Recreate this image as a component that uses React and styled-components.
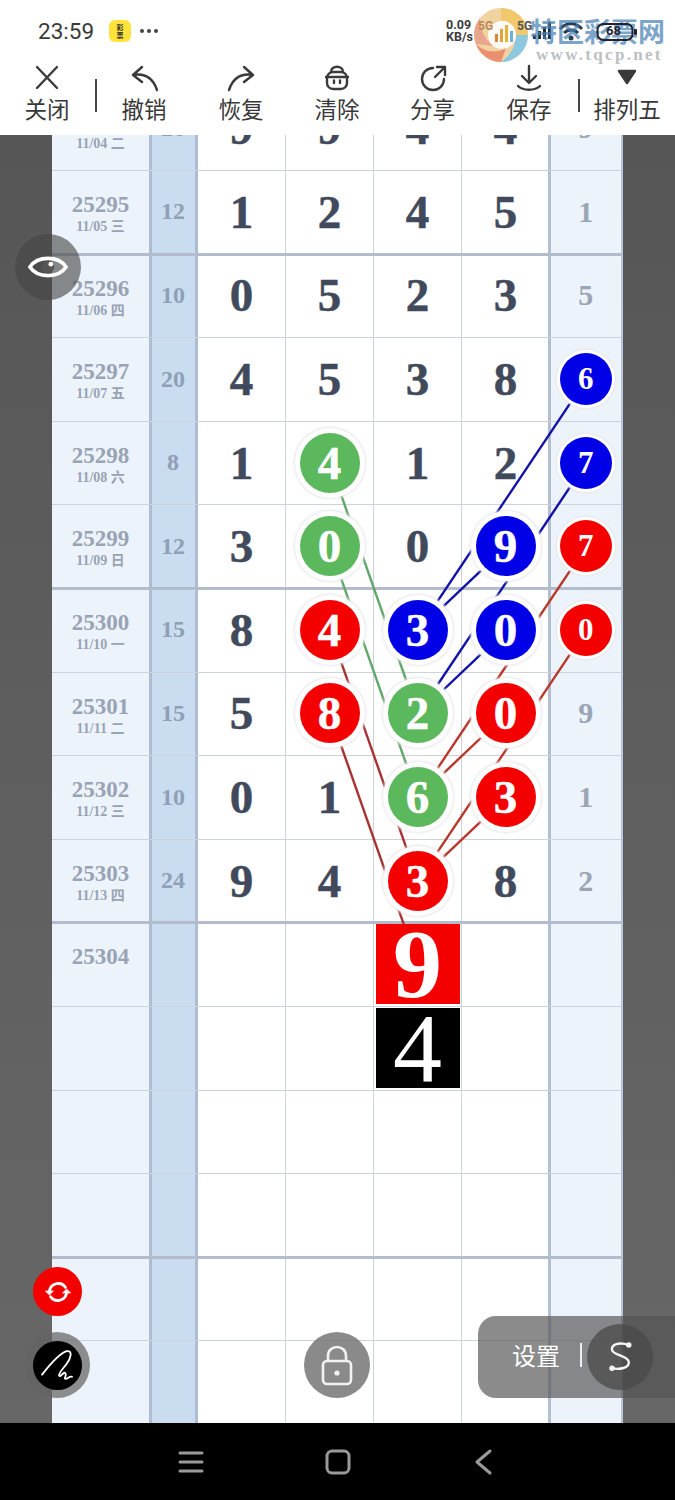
import React from "react";
import styled, { createGlobalStyle } from "styled-components";

const Global = createGlobalStyle`
  html, body { margin: 0; padding: 0; background: #5e5e5e; }
  * { box-sizing: border-box; }
`;

const CJK = `"Noto Sans CJK SC", "Noto Sans", sans-serif`;
const SERIF = `"Liberation Serif", "Noto Sans CJK SC", serif`;

const ROW_H = 83.6;
const COLS = [97, 49, 88, 88, 88, 88, 72];
const centerX = (c) => COLS.slice(0, c).reduce((a, b) => a + b, 0) + COLS[c] / 2;
const centerY = (r) => ROW_H * (r + 0.5);

const RED = "#f50000", BLUE = "#0000e6", GREEN = "#5cb85c";

/* rows: id, date, sum, four digits (value or [value, colour]), side digit */
const ROWS = [
  ["25294", "11/04 二", 26, [9, 9, 4, 4], 9],
  ["25295", "11/05 三", 12, [1, 2, 4, 5], 1, true],
  ["25296", "11/06 四", 10, [0, 5, 2, 3], 5],
  ["25297", "11/07 五", 20, [4, 5, 3, 8], [6, BLUE]],
  ["25298", "11/08 六", 8, [1, [4, GREEN], 1, 2], [7, BLUE]],
  ["25299", "11/09 日", 12, [3, [0, GREEN], 0, [9, BLUE]], [7, RED], true],
  ["25300", "11/10 一", 15, [8, [4, RED], [3, BLUE], [0, BLUE]], [0, RED]],
  ["25301", "11/11 二", 15, [5, [8, RED], [2, GREEN], [0, RED]], 9],
  ["25302", "11/12 三", 10, [0, 1, [6, GREEN], [3, RED]], 1],
  ["25303", "11/13 四", 24, [9, 4, [3, RED], 8], 2, true],
];

const LINES = [
  ["#1212a8", 6, 3, 4, 6],
  ["#1212a8", 6, 4, 4, 7],
  ["#1212a8", 5, 5, 4, 6],
  ["#1212a8", 5, 6, 4, 7],
  ["#b8392c", 6, 5, 4, 8],
  ["#b8392c", 6, 6, 4, 9],
  ["#b8392c", 5, 7, 4, 8],
  ["#b8392c", 5, 8, 4, 9],
  ["#a83232", 3, 6, 4, 9],
  ["#a83232", 3, 7, 4, 10],
  ["#62a76a", 3, 4, 4, 7],
  ["#62a76a", 3, 5, 4, 8],
];

const Page = styled.div`
  width: 675px;
  height: 1500px;
  display: flex;
  flex-direction: column;
  overflow: hidden;
  position: relative;
  font-family: ${CJK};
`;

/* ---------- top area ---------- */
const Top = styled.header`
  height: 135px;
  flex: none;
  background: #fff;
  position: relative;
  z-index: 5;
`;
const StatusBar = styled.div`
  height: 60px;
  display: flex;
  align-items: center;
  padding: 2px 0 0 38px;
`;
const Clock = styled.span`
  font: 400 22.5px Roboto, sans-serif;
  color: #3a3a3a;
  width: 71px;
`;
const AppIcon = styled.div`
  width: 22px;
  height: 22px;
  border-radius: 6px;
  background: #ffe23a;
  display: flex;
  align-items: center;
  justify-content: center;
  font-size: 7px;
  line-height: 8px;
  color: #333;
  text-align: center;
  font-weight: 700;
`;
const Dots = styled.span`
  display: flex;
  gap: 3px;
  margin-left: 9px;
  i {
    width: 4px;
    height: 4px;
    border-radius: 50%;
    background: #444;
  }
`;
const Speed = styled.div`
  position: absolute;
  left: 446px;
  top: 19px;
  font: 700 12.5px/12px Roboto, sans-serif;
  color: #3b3b3b;
`;
const NetTag = styled.span`
  position: absolute;
  left: ${(p) => p.$x}px;
  top: 19px;
  font: 700 12px/14px Roboto, sans-serif;
  color: ${(p) => p.$c};
`;
const WatermarkText = styled.div`
  position: absolute;
  left: 530px;
  top: 13px;
  font: 700 27px/36px ${CJK};
  color: #4a82b4;
  opacity: 0.72;
  white-space: nowrap;
`;
const WatermarkUrl = styled.div`
  position: absolute;
  left: 536px;
  top: 45px;
  font: 700 17px/20px ${SERIF};
  letter-spacing: 2.3px;
  color: #bcc0c4;
  white-space: nowrap;
`;
const Floating = styled.div`
  position: absolute;
  left: ${(p) => p.$x}px;
  top: ${(p) => p.$y}px;
  line-height: 0;
`;
const BatteryLevel = styled.span`
  position: absolute;
  left: 606px;
  top: 24px;
  font: 700 13px/14px Roboto, sans-serif;
  color: #223;
`;
const Toolbar = styled.nav`
  height: 75px;
  display: flex;
  margin-left: -1px;
`;
const ToolItem = styled.div`
  width: ${(p) => p.$w}px;
  flex: none;
  position: relative;
  display: flex;
  flex-direction: column;
  align-items: center;
  padding-top: 4px;
  color: #383838;
  &::before {
    content: "";
    display: ${(p) => (p.$divided ? "block" : "none")};
    position: absolute;
    left: 0;
    top: 19px;
    width: 2px;
    height: 33px;
    background: #444;
  }
`;
const ToolIcon = styled.svg`
  width: 28px;
  height: 28px;
  fill: none;
  stroke: #3a3a3a;
  stroke-width: 2.4;
  stroke-linecap: round;
  stroke-linejoin: round;
`;
const ToolLabel = styled.span`
  font-size: 22.5px;
  line-height: 30px;
  margin-top: 1px;
  white-space: nowrap;
`;

/* ---------- board ---------- */
const Main = styled.main`
  flex: 1;
  min-height: 0;
  overflow: hidden;
  padding-left: 52px;
  background: linear-gradient(#565656, #676767);
`;
const Board = styled.div`
  width: 570.5px;
  margin-top: -48.5px;
  position: relative;
  border-right: 2px solid #b9c5d6;
`;
const Row = styled.div`
  height: ${ROW_H}px;
  display: grid;
  grid-template-columns: 97px 49px 88px 88px 88px 88px 70.5px;
  position: relative;
  &::after {
    content: "";
    position: absolute;
    left: 0;
    right: 0;
    bottom: ${(p) => (p.$heavy ? -2 : -1)}px;
    height: ${(p) => (p.$heavy ? 3 : 1)}px;
    background: ${(p) => (p.$heavy ? "#b3bccc" : "#ccd3dc")};
    z-index: 1;
  }
`;
const IdCell = styled.div`
  background: #edf3fb;
  padding-top: 22px;
  text-align: center;
  color: #98a3b4;
  font-family: ${SERIF};
  font-weight: 700;
`;
const IdText = styled.div`
  font-size: 23px;
  line-height: 26px;
`;
const DateText = styled.div`
  font-size: 14px;
  line-height: 18px;
`;
const SumCell = styled.div`
  background: #c9dcf0;
  border-left: 3px solid #adbcd0;
  border-right: 3px solid #adbcd0;
  display: flex;
  align-items: center;
  justify-content: center;
  color: #8f9fb5;
  font: 700 24px ${SERIF};
  padding-right: 1px;
`;
const DigitCell = styled.div`
  background: #fff;
  border-right: 1px solid #ccd0d8;
  display: flex;
  align-items: center;
  justify-content: center;
  color: #404a5c;
  font: 700 47px ${SERIF};
  -webkit-text-stroke: 0.5px currentColor;
`;
const SideCell = styled.div`
  background: #edf3fb;
  border-left: 3px solid #b3bfd0;
  margin-left: -2px;
  display: flex;
  align-items: center;
  justify-content: center;
  color: #9aa5b6;
  font: 700 30px ${SERIF};
`;
const Ball = styled.div`
  width: ${(p) => (p.$small ? 52 : 60)}px;
  height: ${(p) => (p.$small ? 52 : 60)}px;
  border-radius: 50%;
  background: ${(p) => p.$c};
  color: #fff;
  display: flex;
  align-items: center;
  justify-content: center;
  flex: none;
  font-size: ${(p) => (p.$small ? 31 : 47)}px;
  position: relative;
  z-index: 3;
  box-shadow: ${(p) =>
    p.$small
      ? "0 0 0 3px #fff, 0 0 2px 4px #e8e8e8"
      : "0 0 0 5px #fff, 0 0 3px 6px #e6e6e6"};
`;
const Box = styled.div`
  width: 84px;
  height: 80px;
  background: ${(p) => p.$c};
  color: #fff;
  display: flex;
  align-items: center;
  justify-content: center;
  font: ${(p) => p.$weight} 98px/1 ${SERIF};
  -webkit-text-stroke: 0;
  position: relative;
  z-index: 3;
`;
const LineLayer = styled.svg`
  position: absolute;
  left: 0;
  top: 0;
  z-index: 2;
  pointer-events: none;
`;

/* ---------- floating controls ---------- */
const RoundButton = styled.div`
  position: absolute;
  left: ${(p) => p.$x}px;
  top: ${(p) => p.$y}px;
  width: ${(p) => p.$d}px;
  height: ${(p) => p.$d}px;
  border-radius: 50%;
  background: ${(p) => p.$bg};
  display: flex;
  align-items: center;
  justify-content: center;
  z-index: 6;
`;
const InnerDisc = styled.div`
  width: 49px;
  height: 49px;
  border-radius: 50%;
  background: #000;
  display: flex;
  align-items: center;
  justify-content: center;
`;
const SettingsPill = styled.div`
  position: absolute;
  left: 478px;
  top: 1316px;
  width: 197px;
  height: 82px;
  border-radius: 18px 0 0 18px;
  background: rgba(84, 84, 84, 0.68);
  display: flex;
  align-items: center;
  padding: 0 0 5px 34px;
  color: #fff;
  font-size: 24px;
  z-index: 6;
`;
const PillBar = styled.span`
  width: 2px;
  height: 24px;
  margin-left: 20px;
  background: #eee;
`;
const SDisc = styled.div`
  position: absolute;
  left: 109px;
  top: 8px;
  width: 66px;
  height: 66px;
  border-radius: 50%;
  background: rgba(72, 72, 72, 0.72);
  display: flex;
  align-items: center;
  justify-content: center;
`;

/* ---------- bottom nav ---------- */
const NavBar = styled.footer`
  height: 77px;
  flex: none;
  background: #000;
  display: grid;
  grid-template-columns: 382px 292px;
  position: relative;
  z-index: 5;
`;
const NavGroup = styled.div`
  display: flex;
  align-items: center;
  padding-left: ${(p) => p.$pad || 0}px;
  gap: ${(p) => p.$gap || 0}px;
`;
const NavIcon = styled.svg`
  fill: none;
  stroke: #9a9a9a;
  stroke-width: 3;
  stroke-linecap: round;
  stroke-linejoin: round;
`;

const Cell = ({ v, small }) => {
  if (Array.isArray(v)) return <Ball $c={v[1]} $small={small}>{v[0]}</Ball>;
  return v;
};

const Icons = {
  close: <path d="M4 3 L24 24 M24 3 L4 24" />,
  undo: <path d="M12 3 L3 11 L12 18 M3 11 C15 9 23 14 27 26" />,
  redo: <path d="M17 3 L26 11 L17 18 M26 11 C14 9 6 14 2 26" />,
  trash: (
    <>
      <path d="M8 8 C8 1 20 1 20 8" />
      <rect x="4" y="8" width="20" height="17" rx="6" />
      <path d="M3 13 H25 M11 16.5 V19 M17 16.5 V19" />
    </>
  ),
  share: <path d="M14 4 A11 11 0 1 0 25 15 M16 13 L26 3 M18 3 H26 V11" />,
  save: <path d="M14 2 V18 M7 12 L14 19 L21 12 M3 22 C8 27 20 27 25 22" />,
};

export default function App() {
  return (
    <Page>
      <Global />
      <Top>
        <StatusBar>
          <Clock>23:59</Clock>
          <AppIcon>彩<br />票</AppIcon>
          <Dots><i /><i /><i /></Dots>
        </StatusBar>
        <Speed>0.09<br />KB/s</Speed>
        <Floating $x={531} $y={18}>
          <svg width="62" height="26" viewBox="0 0 62 26">
            <g fill="#1e2a3a">
              <rect x="2" y="17" width="3" height="4" />
              <rect x="7" y="13" width="3" height="8" />
              <rect x="12" y="9" width="3" height="12" />
              <rect x="17" y="4" width="3" height="17" />
            </g>
            <path d="M29 11 C35 4 45 4 51 11 M33 15 C37 11 43 11 47 15" fill="none" stroke="#2c3c50" strokeWidth="3" />
            <circle cx="40" cy="20" r="2.5" fill="#2c3c50" />
          </svg>
        </Floating>
        <WatermarkText>特区彩票网</WatermarkText>
        <WatermarkUrl>www.tqcp.net</WatermarkUrl>
        <Floating $x={596} $y={22}>
          <svg width="60" height="20" viewBox="0 0 60 20">
            <rect x="1.5" y="2" width="35" height="16" rx="6" fill="none" stroke="#223" strokeWidth="2" />
            <rect x="38" y="7" width="3" height="6" rx="1" fill="#223" />
          </svg>
        </Floating>
        <BatteryLevel>68</BatteryLevel>
        <Floating $x={472} $y={6}>
          <svg width="58" height="58" viewBox="0 0 58 58">
            <circle cx="29" cy="29" r="27" fill="#f0d3a0" />
            <path d="M29 2 A27 27 0 0 1 56 29 L44 29 A15 15 0 0 0 29 14 Z" fill="#f2c86c" />
            <path d="M56 29 A27 27 0 0 1 29 56 C38 50 44 40 44 29 Z" fill="#8cc8e0" />
            <path d="M29 56 A27 27 0 0 1 4 38 C12 46 24 48 34 42 Z" fill="#eb8f70" />
            <path d="M4 38 A27 27 0 0 1 8 12 C8 22 12 34 22 40 Z" fill="#e9a58d" />
            <circle cx="30" cy="29" r="14" fill="#fff" opacity="0.9" />
            <rect x="23" y="28" width="3" height="8" fill="#d9843c" />
            <rect x="28" y="23" width="3" height="13" fill="#dfa53c" />
            <rect x="33" y="19" width="3" height="17" fill="#e3b33c" />
            <rect x="38" y="25" width="3" height="11" fill="#6fb0d8" />
          </svg>
        </Floating>
        <NetTag $x={478} $c="#b98a5e">5G</NetTag>
        <NetTag $x={517} $c="#555">5G</NetTag>
        <Toolbar>
          <ToolItem $w={96}><ToolIcon viewBox="0 0 28 28">{Icons.close}</ToolIcon><ToolLabel>关闭</ToolLabel></ToolItem>
          <ToolItem $w={98} $divided><ToolIcon viewBox="0 0 28 28">{Icons.undo}</ToolIcon><ToolLabel>撤销</ToolLabel></ToolItem>
          <ToolItem $w={96}><ToolIcon viewBox="0 0 28 28">{Icons.redo}</ToolIcon><ToolLabel>恢复</ToolLabel></ToolItem>
          <ToolItem $w={96}><ToolIcon viewBox="0 0 28 28">{Icons.trash}</ToolIcon><ToolLabel>清除</ToolLabel></ToolItem>
          <ToolItem $w={95}><ToolIcon viewBox="0 0 28 28">{Icons.share}</ToolIcon><ToolLabel>分享</ToolLabel></ToolItem>
          <ToolItem $w={98}><ToolIcon viewBox="0 0 28 28">{Icons.save}</ToolIcon><ToolLabel>保存</ToolLabel></ToolItem>
          <ToolItem $w={98} $divided>
            <ToolIcon viewBox="0 0 28 28"><path d="M6 7 H22 L14 19 Z" fill="#3a3a3a" /></ToolIcon>
            <ToolLabel>排列五</ToolLabel>
          </ToolItem>
        </Toolbar>
      </Top>

      <Main>
        <Board>
          <LineLayer width="570" height={ROW_H * 16}>
            {LINES.map(([c, c1, r1, c2, r2], i) => (
              <line
                key={i}
                x1={centerX(c1)}
                y1={centerY(r1)}
                x2={centerX(c2)}
                y2={centerY(r2)}
                stroke={c}
                strokeWidth="2.4"
              />
            ))}
          </LineLayer>
          {ROWS.map(([id, date, sum, digits, side, heavy]) => (
            <Row key={id} $heavy={heavy}>
              <IdCell><IdText>{id}</IdText><DateText>{date}</DateText></IdCell>
              <SumCell>{sum}</SumCell>
              {digits.map((d, i) => (
                <DigitCell key={i}><Cell v={d} /></DigitCell>
              ))}
              <SideCell><Cell v={side} small /></SideCell>
            </Row>
          ))}
          <Row>
            <IdCell><IdText>25304</IdText></IdCell>
            <SumCell />
            <DigitCell /><DigitCell />
            <DigitCell><Box $c="#f50000" $weight={700}>9</Box></DigitCell>
            <DigitCell /><SideCell />
          </Row>
          <Row>
            <IdCell /><SumCell />
            <DigitCell /><DigitCell />
            <DigitCell><Box $c="#000" $weight={400}>4</Box></DigitCell>
            <DigitCell /><SideCell />
          </Row>
          {[12, 13, 14, 15].map((k) => (
            <Row key={k} $heavy={k === 13}>
              <IdCell /><SumCell />
              <DigitCell /><DigitCell /><DigitCell /><DigitCell /><SideCell />
            </Row>
          ))}
        </Board>
      </Main>

      <RoundButton $x={15} $y={234} $d={66} $bg="rgba(70,70,70,0.62)">
        <svg width="40" height="30" viewBox="0 0 42 30">
          <path d="M2 15 C10 3 32 3 40 15 C32 27 10 27 2 15 Z" fill="none" stroke="#fff" strokeWidth="3.8" />
          <circle cx="21" cy="15" r="6.5" fill="#555" />
          <circle cx="24" cy="12" r="2.5" fill="#fff" />
        </svg>
      </RoundButton>
      <RoundButton $x={33} $y={1267} $d={49} $bg="#f50000">
        <svg width="28" height="28" viewBox="0 0 30 30" fill="none" stroke="#fff" strokeWidth="3" strokeLinecap="round">
          <path d="M6 13 A9.5 9.5 0 0 1 23 10" />
          <path d="M24 17 A9.5 9.5 0 0 1 7 20" />
          <path d="M2 14 H10 L6 18 Z M28 16 H20 L24 12 Z" fill="#fff" strokeWidth="1" />
        </svg>
      </RoundButton>
      <RoundButton $x={24} $y={1332} $d={66} $bg="rgba(100,100,100,0.72)">
        <InnerDisc>
          <svg width="32" height="30" viewBox="0 0 30 28" fill="none" stroke="#fff" strokeWidth="1.7" strokeLinecap="round" strokeLinejoin="round">
            <path d="M1 23 C8 14 18 3 24 1 C30 0 28 8 24 13 C21 17 16 22 17 24 C18 26 22 19 23 22 C24 25 21 27 23 27 C25 27 27 24 29 25" />
          </svg>
        </InnerDisc>
      </RoundButton>
      <RoundButton $x={304} $y={1332} $d={66} $bg="rgba(118,118,118,0.85)">
        <svg width="32" height="42" viewBox="0 0 32 42" fill="none" stroke="#f2f2f2" strokeWidth="2.6">
          <path d="M7 17 V12 C7 0 25 0 25 12 V17" />
          <rect x="2" y="17" width="28" height="23" rx="4" />
          <circle cx="16" cy="29" r="2.6" fill="#f2f2f2" stroke="none" />
        </svg>
      </RoundButton>
      <SettingsPill>
        设置
        <PillBar />
        <SDisc>
          <svg width="24" height="34" viewBox="0 0 30 40" fill="none" stroke="#f4f4f4" strokeWidth="3" strokeLinecap="round">
            <path d="M26 5 C14 1 4 4 5 11 C6 18 25 18 26 26 C27 34 14 36 5 34" />
            <circle cx="26" cy="5" r="3.4" fill="#f4f4f4" stroke="none" />
            <circle cx="5" cy="34" r="3.4" fill="#f4f4f4" stroke="none" />
          </svg>
        </SDisc>
      </SettingsPill>

      <NavBar>
        <NavGroup $pad={178} $gap={121}>
          <NavIcon width="26" height="26" viewBox="0 0 26 26">
            <path d="M2 4 H24 M2 13 H24 M2 22 H24" />
          </NavIcon>
          <NavIcon width="26" height="26" viewBox="0 0 26 26">
            <rect x="2" y="2" width="22" height="22" rx="5" />
          </NavIcon>
        </NavGroup>
        <NavGroup $pad={91}>
          <NavIcon width="20" height="28" viewBox="0 0 20 28">
            <path d="M17 3 L4 14 L17 25" />
          </NavIcon>
        </NavGroup>
      </NavBar>
    </Page>
  );
}
